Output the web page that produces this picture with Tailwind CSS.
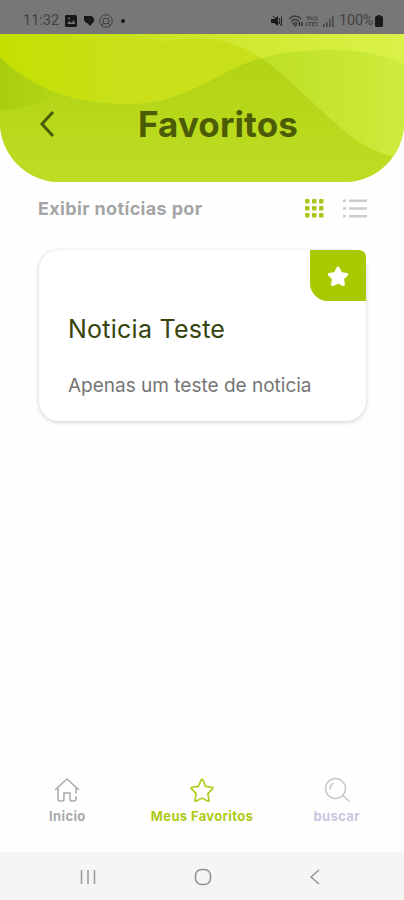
<!DOCTYPE html>
<html lang="pt-BR">
<head>
    <meta charset="UTF-8">
    <meta name="viewport" content="width=device-width, initial-scale=1.0">
    <title>Favoritos</title>
    <script src="https://cdn.jsdelivr.net/npm/@tailwindcss/browser@4"></script>
</head>
<body class="flex h-[900px] w-[404px] flex-col overflow-hidden bg-[#fefefe] font-['Inter',sans-serif]">
    <!-- Status bar -->
    <div class="flex h-[34px] shrink-0 items-end justify-between bg-[#777777] pr-[21px] pb-[5px] pl-[23px] font-['Roboto',sans-serif] text-[#424242]">
        <div class="flex h-4 items-center">
            <span class="w-[42px] text-[14.5px] leading-4 whitespace-nowrap">11:32</span>
            <svg class="h-3 w-3" viewBox="0 0 12 12"><rect width="12" height="12" rx="1.5" fill="#181818"/><path d="M2 9l2.5-3 2 2L9 5l1 4z" fill="#777"/><circle cx="4" cy="3.5" r="1" fill="#777"/></svg>
            <svg class="ml-[6px] h-3 w-3" viewBox="0 0 12 12"><path d="M1 1h7q2 0 2.500 2 2 3-1 5L7 11 5 8.500 2.500 7.500 1 5z" fill="#181818"/></svg>
            <svg class="ml-[4px] h-[14px] w-[14px]" viewBox="0 0 14 14" fill="none" stroke="#3c3c3c"><circle cx="7" cy="7" r="6.300"/><circle cx="7" cy="7" r="3"/><path d="M3 12q0-2 2-3M11 12q0-2-2-3"/></svg>
            <span class="ml-[8px] h-1 w-1 rounded-full bg-[#181818]"></span>
        </div>
        <div class="flex h-4 items-center">
            <svg class="h-3 w-3" viewBox="0 0 12 12"><path d="M0 4h3l4-3v10L3 8H0z" fill="#181818"/><path d="M8 3q2 3 0 6M10.500 1.500v9M2 1l9 10" fill="none" stroke="#242424"/></svg>
            <svg class="ml-[5px] h-3 w-[16px]" viewBox="0 0 16 12" fill="none" stroke="#3c3c3c" stroke-width="1.200"><path d="M1 4q6-6 12 0M3 6.500q4-4 8 0M5 8.500q2-2 4 0L7.500 11z"/><path d="M11.500 7v4M14 7v4" stroke="#222"/></svg>
            <span class="ml-[1px] flex w-[14px] flex-col items-center text-[6px] leading-[6px] font-bold"><span>Vo))</span><span>LTE1</span></span>
            <svg class="ml-[4px] h-[11px] w-[11px]" viewBox="0 0 11 11" fill="#444"><rect y="8" width="1.500" height="3"/><rect x="3" y="6" width="1.500" height="5"/><rect x="6" y="3" width="1.500" height="8"/><rect x="9" width="1.500" height="11"/></svg>
            <span class="ml-[5px] w-[36px] text-[14.5px] leading-4 tracking-[-0.2px] whitespace-nowrap">100%</span>
            <svg class="h-3 w-2" viewBox="0 0 8 12" fill="#1a1a1a"><rect x="2.500" width="3" height="2"/><rect y="1" width="8" height="11" rx="1.500"/></svg>
        </div>
    </div>

    <!-- Header -->
    <header class="relative h-[148px] shrink-0 overflow-hidden rounded-b-[60px] bg-[#b8da20]">
        <svg class="absolute inset-0 h-full w-full" viewBox="0 0 404 148" preserveAspectRatio="none">
            <defs>
                <linearGradient id="base" x1="0" y1="0" x2="0" y2="1"><stop offset="0" stop-color="#afd212"/><stop offset=".55" stop-color="#b7d81a"/><stop offset="1" stop-color="#bddd25"/></linearGradient>
                <linearGradient id="left" x1="0" y1="0" x2="1" y2="0"><stop offset="0" stop-color="#c3e000"/><stop offset=".5" stop-color="#c9e01b"/><stop offset="1" stop-color="#c8e01a"/></linearGradient>
                <linearGradient id="right" x1="0" y1="0" x2="1" y2="0"><stop offset="0" stop-color="#bddf23"/><stop offset="1" stop-color="#ceec3d"/></linearGradient>
                <linearGradient id="top" x1="0" y1="0" x2="1" y2="0"><stop offset="0" stop-color="#c9e31f"/><stop offset="1" stop-color="#daf248"/></linearGradient>
                <linearGradient id="shade" x1="0" y1="0" x2="1" y2="0"><stop offset="0" stop-color="#aace0c"/><stop offset="1" stop-color="#b2d515"/></linearGradient>
            </defs>
            <rect width="404" height="148" fill="url(#base)"/>
            <path d="M0 23Q22 44 56 60Q30 76 0 76Z" fill="url(#shade)"/>
            <path d="M130 0H404V30L261 24L150 20Z" fill="url(#top)"/>
            <path d="M261 24C285 18 302 16 330 16Q375 16 404 30V125L392 122C365 115 350 103 322 77C298 55 281 38 261 24Z" fill="url(#right)"/>
            <path d="M0 0H130L160 8C200 1 232 4 261 24C240 30 222 41 202 51C173 65 153 70 126 70C82 70 39 60 0 23Z" fill="url(#left)"/>
        </svg>
        <div class="relative flex items-center pt-[68px] pl-[39px]">
            <svg class="h-[28px] w-4" viewBox="0 0 16 28" fill="none" stroke="#4a5c0b" stroke-width="3"><path d="M14 2L3 14l11 12"/></svg>
            <h1 class="ml-[83px] text-[35px] leading-[44px] font-bold tracking-[0.1px] text-[#4b5b06]">Favoritos</h1>
        </div>
    </header>

    <main class="flex-1 px-[38px]">
        <div class="flex h-[52px] items-center justify-between">
            <span class="text-[18px] font-bold tracking-[0.35px] text-[#a5a5a5]">Exibir notícias por</span>
            <div class="-mr-[2px] flex gap-[19px]">
                <svg class="h-[19px] w-[19px]" viewBox="0 0 19 19" fill="#a9c51b">
                    <rect x="0" y="0" width="4.500" height="4.500" rx="1"/><rect x="7" y="0" width="4.500" height="4.500" rx="1"/><rect x="14" y="0" width="4.500" height="4.500" rx="1"/>
                    <rect x="0" y="7" width="4.500" height="4.500" rx="1"/><rect x="7" y="7" width="4.500" height="4.500" rx="1"/><rect x="14" y="7" width="4.500" height="4.500" rx="1"/>
                    <rect x="0" y="14" width="4.500" height="4.500" rx="1"/><rect x="7" y="14" width="4.500" height="4.500" rx="1"/><rect x="14" y="14" width="4.500" height="4.500" rx="1"/>
                </svg>
                <svg class="h-[19px] w-[25px]" viewBox="0 0 25 19" fill="#cbcbcd"><path d="M0 .5h3v2.500H0zM6 .5h18v2.500H6zM0 8.200h3v2.500H0zM6 8.200h18v2.500H6zM0 16h3v2.500H0zM6 16h18v2.500H6z"/></svg>
            </div>
        </div>

        <article class="relative mt-[16px] ml-[1px] h-[171px] w-[327px] rounded-[20px] bg-white px-[29px] pt-[62px] shadow-[0_1px_4px_rgba(0,0,0,0.2)]">
            <div class="absolute top-0 right-0 flex h-[51px] w-[56px] items-center justify-center rounded-tr-[7px] rounded-bl-[18px] bg-[#a7c900] pt-[2px]">
                <svg class="h-6 w-6" viewBox="0 0 24 24" fill="#fff" stroke="#fff" stroke-width="3" stroke-linejoin="round"><path d="M12 3l2.700 5.500 6 .9-4.300 4.200 1 6-5.400-2.800-5.400 2.800 1-6-4.300-4.200 6-.9z"/></svg>
            </div>
            <h2 class="text-[25px] leading-[34px] tracking-[0.25px] whitespace-nowrap text-[#36440d]">Noticia Teste</h2>
            <p class="mt-[26px] text-[19px] leading-[28px] whitespace-nowrap text-[#757575]">Apenas um teste de noticia</p>
        </article>
    </main>

    <!-- Bottom tabs -->
    <nav class="grid h-[76px] shrink-0 grid-cols-3 text-[13px] leading-4 font-bold tracking-[0.35px]">
        <a class="flex flex-col items-center gap-[4px] text-[#a9a9a9]">
            <svg class="h-7 w-7" viewBox="0 0 28 28" fill="none" stroke="currentColor" stroke-width="1.500" stroke-linecap="round" stroke-linejoin="round"><path d="M2.500 13.500L14 3l11.500 10.500M5 12v11q0 2 2 2h2.500q1.500 0 1.500-2v-6h6v6q0 2 1.500 2H21q2 0 2-2v-2.500M23 12v5"/></svg>
            <span>Inicio</span>
        </a>
        <a class="flex flex-col items-center gap-[4px] text-[#adcb16]">
            <svg class="h-7 w-7" viewBox="-1.500 -1.500 31 31" fill="none" stroke="currentColor" stroke-width="1.800" stroke-linejoin="round"><path d="M13 3q1-1.500 2 0l3 7 7 1q2 .4.500 1.800l-5 5.200 1.200 7.200q.2 1.600-1.300.9L14 23l-6.400 3.100q-1.500.7-1.300-.9L7.500 18l-5-5.200Q1 11.400 3 11l7-1z"/></svg>
            <span class="whitespace-nowrap">Meus Favoritos</span>
        </a>
        <a class="flex flex-col items-center gap-[4px] text-[#c9c7df]">
            <svg class="h-7 w-7" viewBox="0 0 28 28" fill="none" stroke="#c7c7d0" stroke-width="1.500" stroke-linecap="round"><circle cx="12.500" cy="12.500" r="10"/><path d="M7 13q0-4 3-5.500M20 19.500l6 5.500"/></svg>
            <span>buscar</span>
        </a>
    </nav>

    <!-- Android navigation -->
    <div class="flex h-[48px] shrink-0 items-center justify-between bg-[#f5f5f5] pt-[2px] pr-[83px] pl-[80px]">
        <svg class="h-4 w-4" viewBox="0 0 16 16" stroke="#999" stroke-width="1.500"><path d="M1.500 1v14M8 1v14M14.500 1v14"/></svg>
        <svg class="h-[18px] w-[18px]" viewBox="0 0 18 18" fill="none" stroke="#929292" stroke-width="1.600"><rect x="1.500" y="1.500" width="15" height="15" rx="6"/></svg>
        <svg class="h-4 w-3" viewBox="0 0 12 16" fill="none" stroke="#929292" stroke-width="1.500"><path d="M10 1L2 8l8 7"/></svg>
    </div>
</body>
</html>
